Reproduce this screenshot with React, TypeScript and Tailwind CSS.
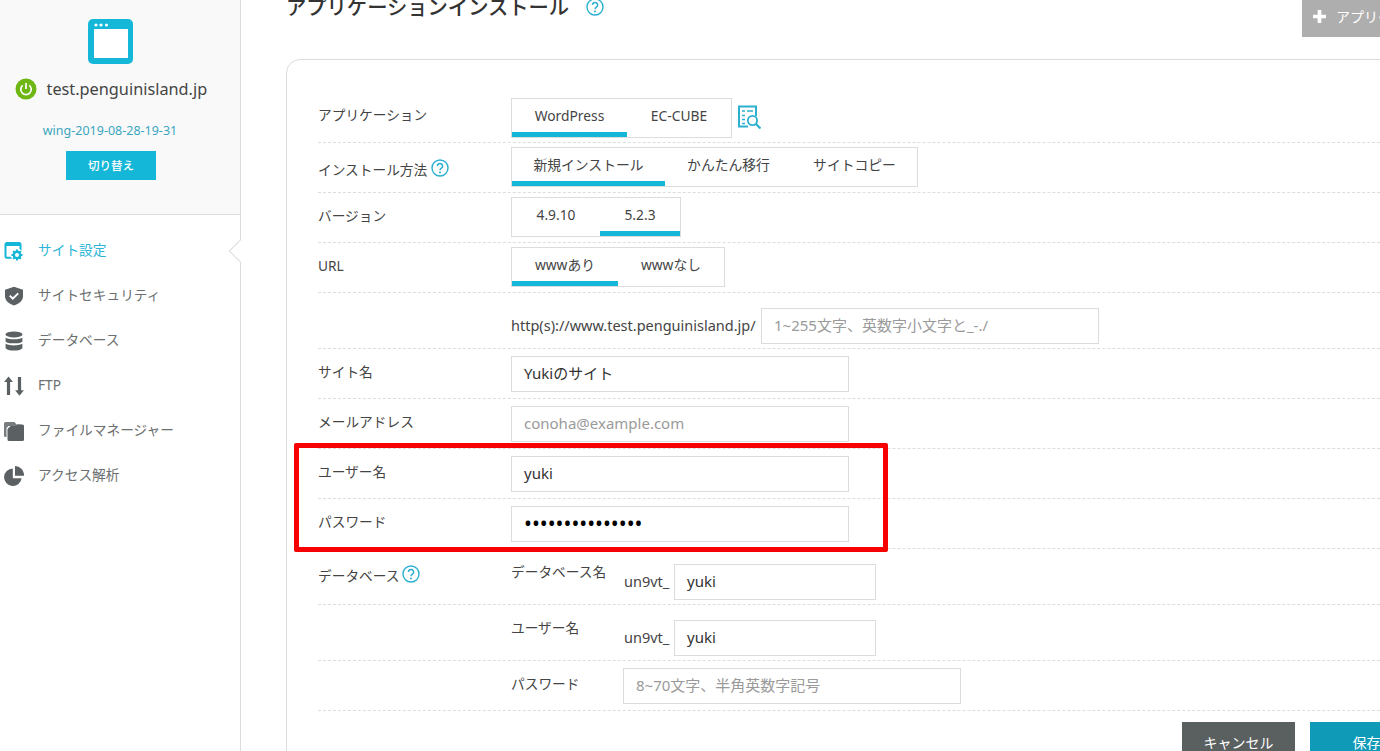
import React from "react";

function Help({ className }: { className: string }) {
  return (
    <svg viewBox="0 0 18 18" className={className}>
      <circle cx="9" cy="9" r="8" fill="none" stroke="#2cb0d0" strokeWidth="1.4" />
      <path d="M6.4 7a2.6 2.6 0 1 1 4 2.2c-.9.6-1.4 1-1.4 2.1" fill="none" stroke="#2cb0d0" strokeWidth="1.5" />
      <circle cx="9" cy="13.6" r="1" fill="#2cb0d0" />
    </svg>
  );
}

function Tabs({ items, active, widths }: { items: string[]; active: number; widths: string[] }) {
  return (
    <div className="flex border border-[#dcdcdc] h-[40px]">
      {items.map((t, i) => (
        <div
          key={t}
          className={`${widths[i]} h-full flex justify-center pt-[7px] text-[13.8px] leading-[20px] text-[#444] ${
            i === active ? "border-b-[5px] border-[#14b7d8]" : ""
          }`}
        >
          {t}
        </div>
      ))}
    </div>
  );
}

function Row({ label, help, h, mt, children, labelMt = "mt-[14px]" }: any) {
  return (
    <div className={`flex border-b border-dashed border-[#dddddd] ${h}`}>
      <div className={`w-[193px] shrink-0 flex items-start text-[13.7px] leading-[20px] text-[#444] ${labelMt}`}>
        {label}
        {help}
      </div>
      <div className={mt}>{children}</div>
    </div>
  );
}

function Field({ value, placeholder, width = "w-[338px]", dots }: { value?: string; placeholder?: string; width?: string; dots?: boolean }) {
  return (
    <div
      className={`${width} h-[36px] border border-[#dcdcdc] px-[12px] flex items-center pb-[3px] leading-[20px] overflow-hidden ${
        dots ? "text-black text-[21px]" : value ? "text-[#333] text-[15px]" : "text-[#9a9a9a] text-[15px]"
      }`}
    >
      {value ?? placeholder}
    </div>
  );
}

function Nav({ icon, label, active }: { icon: React.ReactNode; label: string; active?: boolean }) {
  return (
    <div className={`h-[45px] flex items-center text-[13.7px] ${active ? "text-[#2cb5d6]" : "text-[#6b6f70]"}`}>
      <div className="w-[38px] pl-[4px] shrink-0 flex items-center">{icon}</div>
      <span>{label}</span>
    </div>
  );
}

const G = "#5b6163";
const C = "#14b7d8";

function DbField({ label, value }: { label: string; value: string }) {
  return (
    <div className="flex items-start">
      <div className="w-[113px] text-[13.7px] leading-[20px] text-[#444] -mt-[2px]">{label}</div>
      <div className="flex items-center h-[36px]">
        <span className="text-[14.5px] leading-[20px] pb-[3px] text-[#444] w-[50px]">un9vt_</span>
        <Field value={value} width="w-[202px]" />
      </div>
    </div>
  );
}

export default function App() {
  return (
    <div
      className="flex w-[1380px] h-[751px] overflow-hidden bg-white"
      style={{ fontFamily: '"Noto Sans", "Noto Sans CJK JP", sans-serif' }}
    >
      <aside className="relative w-[241px] shrink-0 border-r border-[#dcdcdc] h-full">
        <div className="h-[215px] bg-[#f9f9f9] border-b border-[#dcdcdc] flex flex-col items-center pt-[19px] pr-[20px]">
          <svg viewBox="0 0 45 45" className="w-[45px] h-[45px]">
            <rect width="45" height="45" rx="5" fill={C} />
            <rect x="6" y="10" width="34" height="29" fill="#fff" />
            <circle cx="8" cy="6" r="1.6" fill="#fff" />
            <circle cx="13" cy="6" r="1.6" fill="#fff" />
            <circle cx="18.5" cy="6" r="1.6" fill="#fff" />
          </svg>
          <div className="flex items-center mt-[14px] w-[221px] pl-[15px] whitespace-nowrap">
            <svg viewBox="0 0 22 22" className="w-[22px] h-[22px] shrink-0">
              <circle cx="11" cy="11" r="10.5" fill="#6eb614" />
              <path d="M7.7 7.4a5.2 5.2 0 1 0 6.6 0" fill="none" stroke="#fff" strokeWidth="1.7" />
              <path d="M11 5v6" stroke="#fff" strokeWidth="1.7" />
            </svg>
            <span className="ml-[10px] text-[16.3px] leading-[22px] text-[#444]">test.penguinisland.jp</span>
          </div>
          <div className="mt-[24px] text-[12.5px] leading-[14px] text-[#3ba6bf]">wing-2019-08-28-19-31</div>
          <div className="mt-[13px] ml-[2px] w-[90px] h-[29px] bg-[#14b7d8] flex items-center justify-center text-white text-[11.5px] font-medium">
            切り替え
          </div>
        </div>
        <div className="absolute left-[232px] top-[243px] w-[16px] h-[16px] rotate-45 bg-white border-l border-b border-[#dcdcdc]" />
        <nav className="pt-[13px]">
          <Nav
            active
            label="サイト設定"
            icon={
              <svg viewBox="0 0 20 20" className="w-[20px] h-[20px]">
                <rect x="1.5" y="2" width="15" height="14.8" rx="1.5" fill="none" stroke={C} strokeWidth="2" />
                <path d="M1 2h16v3H1z" fill={C} />
                <circle cx="13" cy="14" r="6.5" fill="#fff" />
                <circle cx="13" cy="14" r="3.2" fill="none" stroke={C} strokeWidth="2.4" />
                <path d="M13 8.500v2M13 17.500v2M7.500 14h2M16.500 14h2M9.100 10.100l1.400 1.400M15.500 16.500l1.400 1.400M16.900 10.100l-1.400 1.400M10.500 16.500l-1.400 1.400" stroke={C} strokeWidth="2" />
              </svg>
            }
          />
          <Nav
            label="サイトセキュリティ"
            icon={
              <svg viewBox="0 0 20 20" className="w-[20px] h-[20px]">
                <path d="M10 .8l9 3v6.400c0 4.400-4 7.600-9 9.200-5-1.600-9-4.800-9-9.200V3.800z" fill={G} />
                <path d="M5.800 9.600l3 3 5.400-5.200" fill="none" stroke="#fff" strokeWidth="2" />
              </svg>
            }
          />
          <Nav
            label="データベース"
            icon={
              <svg viewBox="0 0 20 20" className="w-[20px] h-[20px]">
                <ellipse cx="10" cy="3.400" rx="8.400" ry="3" fill={G} />
                <path d="M1.600 6.400c1.600 2.400 15.200 2.400 16.800 0v4c-1.600 2.600-15.200 2.600-16.800 0z" fill={G} />
                <path d="M1.600 12.600c1.600 2.400 15.200 2.400 16.800 0v4.400c-1 3.400-15.800 3.400-16.800 0z" fill={G} />
              </svg>
            }
          />
          <Nav
            label="FTP"
            icon={
              <svg viewBox="0 0 20 20" className="w-[20px] h-[20px]">
                <path d="M4.500 .5l4.400 5.600H6.100V19H2.900V6.100H.1z" fill={G} />
                <path d="M15.500 19.800l-4.400-5.600h2.800V1h3.200v13.200h2.800z" fill={G} />
              </svg>
            }
          />
          <Nav
            label="ファイルマネージャー"
            icon={
              <svg viewBox="0 0 20 20" className="w-[20px] h-[20px]">
                <path d="M1.500 1h9l2 2.500h4V5H4.500L2.500 7v9H1.500Q0 16 0 14.500V2.500Q0 1 1.500 1z" fill="#777c7e" />
                <path d="M3.500 8l3-3h5.500l1.500-1.500h5Q20 3.500 20 5v13.500Q20 20 18.500 20H5Q3.500 20 3.500 18.500z" fill={G} />
              </svg>
            }
          />
          <Nav
            label="アクセス解析"
            icon={
              <svg viewBox="0 0 20 20" className="w-[20px] h-[20px]">
                <path d="M8.800 2.400a8.800 8.800 0 1 0 8.800 9.800H8.800z" fill={G} />
                <path d="M11 0a9 9 0 0 1 9 9.800h-9z" fill={G} />
              </svg>
            }
          />
        </nav>
      </aside>

      <main className="flex-1 min-w-0 pl-[45px] overflow-hidden">
        <div className="h-[59px] flex items-start justify-between">
          <div className="flex items-center -mt-[7px]">
            <h1 className="text-[20.3px] leading-[28px] font-medium text-[#333]">アプリケーションインストール</h1>
            <Help className="w-[18px] h-[18px] ml-[17px]" />
          </div>
          <div className="w-[102px] -mr-[24px] h-[37px] bg-[#aeaeae] flex items-center pl-[11px] pb-[5px] text-white text-[14px] whitespace-nowrap overflow-hidden">
            <svg viewBox="0 0 14 14" className="w-[13px] h-[13px] mr-[10px] shrink-0">
              <path d="M5 0h4v5h5v4H9v5H5V9H0V5h5z" fill="#fff" />
            </svg>
            アプリケーション
          </div>
        </div>

        <div className="w-[1200px] h-[800px] border border-[#dcdcdc] rounded-tl-[14px] pl-[31px] pt-[32px]">
          <Row label="アプリケーション" h="h-[51px]" mt="mt-[6px] flex items-start" labelMt="mt-[13px]">
            <Tabs items={["WordPress", "EC-CUBE"]} active={0} widths={["w-[115px]", "w-[104px]"]} />
            <svg viewBox="0 0 24 24" className="w-[24px] h-[24px] ml-[5px] mt-[7px]">
              <path d="M11 21.500H2V1.500h17V11" fill="none" stroke="#2cb0d0" strokeWidth="2" />
              <path d="M5 6h3M10 6h6M5 10.500h3M5 14.500h3M5 18.500h3" stroke="#2cb0d0" strokeWidth="1.5" />
              <circle cx="15.5" cy="15.5" r="4.6" fill="#fff" stroke="#2cb0d0" strokeWidth="1.8" />
              <path d="M19 19l4.500 4.500" stroke="#2cb0d0" strokeWidth="2.2" />
            </svg>
          </Row>
          <Row
            label="インストール方法"
            help={<Help className="w-[18px] h-[18px] ml-[4px] -mt-[1px]" />}
            h="h-[50px]"
            mt="mt-[4px]"
            labelMt="mt-[17px]"
          >
            <Tabs
              items={["新規インストール", "かんたん移行", "サイトコピー"]}
              active={0}
              widths={["w-[153px]", "w-[127px]", "w-[125px]"]}
            />
          </Row>
          <Row label="バージョン" h="h-[50px]" mt="mt-[4px]" labelMt="mt-[13px]">
            <Tabs items={["4.9.10", "5.2.3"]} active={1} widths={["w-[88px]", "w-[80px]"]} />
          </Row>
          <Row label="URL" h="h-[50px]" mt="mt-[4px]" labelMt="mt-[13px]">
            <Tabs items={["wwwあり", "wwwなし"]} active={0} widths={["w-[106px]", "w-[106px]"]} />
          </Row>
          <Row label="" h="h-[56px]" mt="mt-[15px] flex items-center h-[36px]">
            <span className="text-[14.5px] leading-[20px] pb-[3px] text-[#444] w-[250px] whitespace-nowrap">http(s)://www.test.penguinisland.jp/</span>
            <Field placeholder="1~255文字、英数字小文字と_-./" />
          </Row>
          <Row label="サイト名" h="h-[50px]" mt="mt-[7px]" labelMt="mt-[13px]">
            <Field value="Yukiのサイト" />
          </Row>
          <Row label="メールアドレス" h="h-[50px]" mt="mt-[7px]" labelMt="mt-[13px]">
            <Field placeholder="conoha@example.com" />
          </Row>
          <div className="relative">
            <div className="absolute -left-[24px] -top-[6px] w-[594px] h-[109px] border-[5px] border-[#f60000] rounded-[2px] pointer-events-none" />
            <Row label="ユーザー名" h="h-[50px]" mt="mt-[7px]" labelMt="mt-[13px]">
              <Field value="yuki" />
            </Row>
            <Row label="パスワード" h="h-[50px]" mt="mt-[7px]" labelMt="mt-[13px]">
              <Field dots value="•••••••••••••••" />
            </Row>
          </div>
          <Row
            label="データベース"
            help={<Help className="w-[18px] h-[18px] ml-[3px] -mt-[1px]" />}
            h="h-[56px]"
            mt="mt-[15px] flex items-start"
            labelMt="mt-[17px]"
          >
            <DbField label="データベース名" value="yuki" />
          </Row>
          <Row label="" h="h-[56px]" mt="mt-[15px] flex items-start">
            <DbField label="ユーザー名" value="yuki" />
          </Row>
          <Row label="" h="h-[50px]" mt="mt-[7px] flex items-start">
            <div className="w-[112px] text-[13.7px] leading-[20px] text-[#444] mt-[6px]">パスワード</div>
            <Field placeholder="8~70文字、半角英数字記号" />
          </Row>
          <div className="flex pl-[864px] pt-[11px] gap-[15px]">
            <div className="w-[113px] h-[40px] bg-[#5a6060] text-white text-[14px] flex items-center justify-center">キャンセル</div>
            <div className="w-[113px] h-[40px] bg-[#0f9ab8] text-white text-[14px] flex items-center justify-center">保存</div>
          </div>
        </div>
      </main>
    </div>
  );
}
